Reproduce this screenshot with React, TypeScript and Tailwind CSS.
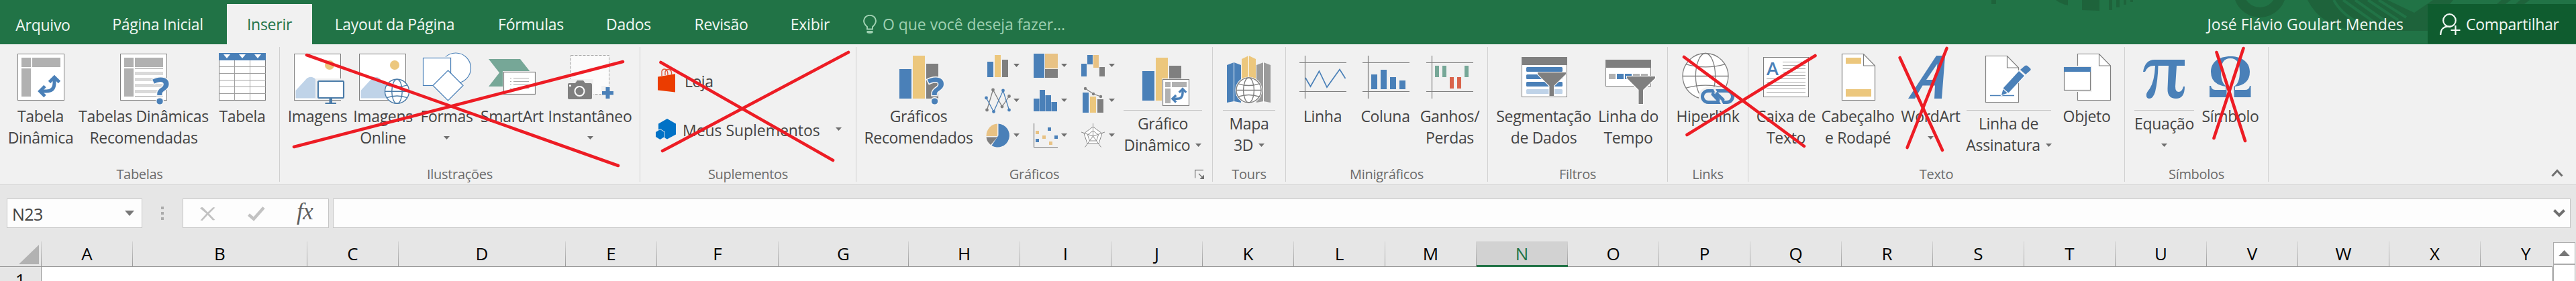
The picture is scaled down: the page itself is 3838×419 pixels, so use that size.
import type { ReactNode } from "react";

const BLUE = "#4a80b8";
const GOLD = "#ecc77d";
const GRAY = "#7f7f7f";

/* ---------- small building blocks ---------- */

function Caret({ className = "" }: { className?: string }) {
  return (
    <svg className={`h-[5px] w-[9px] shrink-0 ${className}`} viewBox="0 0 9 5">
      <path d="M0 0h9L4.5 5z" fill="#6f6f6f" />
    </svg>
  );
}

function Group({ label, width, children, extra }: { label: string; width: string; children: ReactNode; extra?: ReactNode }) {
  return (
    <section className={`flex h-[209px] shrink-0 ${width}`}>
      <div className="flex min-w-0 flex-1 flex-col">
        <div className="flex h-[180px]">{children}</div>
        <div className="relative text-center text-[20px] leading-[28px] tracking-[-0.3px] whitespace-nowrap text-[#6b6b6b]">
          {label}
          {extra}
        </div>
      </div>
      <div className="mt-1 h-[201px] w-px bg-[#d0d0d0]" />
    </section>
  );
}

type ItemProps = {
  box: string;
  view: string;
  lines: ReactNode[];
  split?: boolean;
  children: ReactNode;
};

function Item({ box, view, lines, split, children }: ItemProps) {
  return (
    <button className={`flex shrink-0 flex-col items-stretch ${box}`}>
      <svg className={`w-full shrink-0 overflow-visible ${split ? "h-[98px]" : "h-[91px]"}`} viewBox={view} preserveAspectRatio="xMidYMin slice">
        {children}
      </svg>
      {split && <span className="mb-[3px] h-px w-full shrink-0 bg-[#c6c6c6]" />}
      {lines.map((l, i) => (
        <span key={i} className="flex h-8 items-center justify-center text-[23px] leading-8 tracking-[-0.32px] whitespace-nowrap text-[#444444]">
          {l}
        </span>
      ))}
    </button>
  );
}

/* ---------- drawings shared by several icons ---------- */

function Globe({ cx, cy, rx, ry, stroke, w = 1.3 }: { cx: number; cy: number; rx: number; ry: number; stroke: string; w?: number }) {
  const k = ry * 0.52;
  const e = rx * 0.85;
  return (
    <g fill="none" stroke={stroke} strokeWidth={w}>
      <ellipse cx={cx} cy={cy} rx={rx} ry={ry} fill="#fff" />
      <ellipse cx={cx} cy={cy} rx={rx * 0.43} ry={ry} />
      <path d={`M${cx - rx} ${cy}H${cx + rx}M${cx - e} ${cy - k}Q${cx} ${cy - k * 0.65 + 2} ${cx + e} ${cy - k}M${cx - e} ${cy + k}Q${cx} ${cy + k * 0.65 - 2} ${cx + e} ${cy + k}`} />
    </g>
  );
}

function Swap({ x, y, s = 1, w = 5 }: { x: number; y: number; s?: number; w?: number }) {
  return (
    <g transform={`translate(${x} ${y}) scale(${s})`} fill="none" stroke={BLUE} strokeWidth={w}>
      <path d="M3 24H13Q25 24 25 12V4" />
      <path d="M17.5 10.5 25 3l7.500 7.500M11 16.500 3.500 24l7.500 7.500" strokeWidth={w * 0.95} />
    </g>
  );
}

function PictureFrame({ x }: { x: number }) {
  return (
    <g>
      <rect x={x} y="80.500" width="69" height="69" fill="#fff" stroke={GRAY} />
      <path d={`M${x + 2} 146.500V135L${x + 19} 116.500Q${x + 24.5} 113 ${x + 30} 116.500L${x + 50} 138V146.500z`} fill="#bfd3e8" />
      <circle cx={x + 52.5} cy="97" r="7" fill="#ecc77d" />
    </g>
  );
}

function Question({ x, y }: { x: number; y: number }) {
  return (
    <text x={x} y={y} fontSize="54" fontWeight="700" textAnchor="middle" fill={BLUE} stroke="#f5f5f5" strokeWidth="3" paintOrder="stroke" fontFamily="Open Sans, sans-serif">
      ?
    </text>
  );
}

function Page({ x, y, w = 49, h = 69 }: { x: number; y: number; w?: number; h?: number }) {
  return (
    <g fill="#fff" stroke={GRAY} strokeWidth="1.200">
      <path d={`M${x} ${y}H${x + w - 17}L${x + w} ${y + 17.5}V${y + h}H${x}z`} />
      <path d={`M${x + w - 17} ${y}V${y + 17.5}H${x + w}`} fill="none" />
    </g>
  );
}

function Funnel({ x, y, h }: { x: number; y: number; h: number }) {
  return <path d={`M${x} ${y}h42v2.500L${x + 24} ${y + 20}V${y + h}h-6.500V${y + 20}L${x} ${y + 2.5}z`} fill={GRAY} stroke="#fff" strokeWidth="2" paintOrder="stroke" />;
}

function SparkAxes({ x }: { x: number }) {
  return <path d={`M${x} 93.500h70M${x} 136.500h70M${x + 8.5} 83v64`} stroke={GRAY} strokeWidth="1.200" fill="none" />;
}

function MiniChart({ view, width, children, cx, cy }: { view: string; width: string; children: ReactNode; cx: number; cy: number }) {
  return (
    <svg className={`h-[52px] ${width}`} viewBox={view}>
      {children}
      <path d={`M${cx - 4.5} ${cy - 2.5}h9l-4.500 5z`} fill="#6f6f6f" />
    </svg>
  );
}

/* ---------- title tabs ---------- */

const tabs = [
  { t: "Arquivo", c: "w-[128px] pt-[1px]" },
  { t: "Página Inicial", c: "w-[210px] pl-1" },
  { t: "Inserir", c: "w-[127px] bg-[#f1f1f1] text-[#217346]" },
  { t: "Layout da Página", c: "w-[246px]" },
  { t: "Fórmulas", c: "w-[160px]" },
  { t: "Dados", c: "w-[131px]" },
  { t: "Revisão", c: "w-[145px]" },
  { t: "Exibir", c: "w-[120px]" },
];

function TitleBar() {
  return (
    <header className="relative flex h-[66px] bg-[#217346] pt-[6px] text-[23px] leading-[32px] tracking-[-0.27px] text-[#f0f7f2]">
      <svg className="absolute top-0 right-0 h-[66px] w-[898px]" viewBox="2940 0 898 66" fill="#1e633b">
        <path d="M2967 0h7v6h-7zM3063 0h18v8q-10-2-18-8zM3102 0h26v16l-26-1zM3142 0h5v15h-5zM3153 0h5v11h-5zM3164 0h4v7h-4zM3174 0h4v3h-4z" />
        <circle cx="3367" cy="-13" r="31.500" fill="none" stroke="#1e633b" strokeWidth="15" />
        <path d="M3438 0H3655L3617 46H3512Q3458 40 3438 0z" />
        <g stroke="#217346" strokeWidth="4" fill="none">
          <path d="M3477 0Q3490 24 3524 39M3491 0L3540 35M3509 0L3556 33M3528 0L3573 30M3544 0L3585 26" />
        </g>
        <path d="M3557 0H3625L3597 19z" fill="#217346" />
        <path d="M3727 0h14l-8 6h-13zM3755 0h14l-8 6h-13z" />
      </svg>
      <nav className="flex">
        {tabs.map((tab) => (
          <button key={tab.t} className={`flex shrink-0 justify-center whitespace-nowrap ${tab.c}`}>
            <span className="mt-[14px]">{tab.t}</span>
          </button>
        ))}
      </nav>
      <div className="flex pl-[19px] text-[#9fd0b1]">
        <svg className="mt-4 mr-[9px] h-[29px] w-[20px]" viewBox="0 0 20 29" fill="none" stroke="#9fd0b1" strokeWidth="2">
          <path d="M6 21.500V18Q1 13.500 1 9A9 8.200 0 0 1 19 9Q19 13.500 14 18V21.500z" />
          <path d="M5.500 24h9v3q-4.500 2-9 0z" fill="#9fd0b1" stroke="none" />
        </svg>
        <span className="mt-[14px] tracking-[-0.05px]">O que você deseja fazer...</span>
      </div>
      <div className="relative ml-auto mt-[14px] pr-[36px] tracking-[0.1px]">José Flávio Goulart Mendes</div>
      <button className="relative mb-px flex w-[221px] bg-[#0f5c2f] pl-[18px]">
        <svg className="mt-[14px] mr-[8px] h-[33px] w-[31px]" viewBox="0 0 31 33" fill="none" stroke="#f4faf6" strokeWidth="2.200">
          <circle cx="14.500" cy="10.500" r="9.300" />
          <path d="M1.200 32Q1.500 20 12 19.500H17M23.500 18V32M16.500 25H30.500" />
        </svg>
        <span className="mt-[14px]">Compartilhar</span>
      </button>
    </header>
  );
}

/* ---------- ribbon groups ---------- */

function Tabelas() {
  return (
    <Group label="Tabelas" width="w-[417px]">
      <Item box="ml-[11px] w-[99px]" view="11 66 99 91" lines={["Tabela", "Dinâmica"]}>
        <rect x="26.500" y="80.500" width="69" height="69" fill="#fff" stroke={GRAY} />
        <path d="M32 86h14v14H32zM48 86h42v14H48zM32 102h14v42H32z" fill="#b1b1b1" />
        <Swap x={56} y={112} s={1} />
      </Item>
      <Item box="ml-1 w-[200px]" view="114 66 200 91" lines={["Tabelas Dinâmicas", "Recomendadas"]}>
        <rect x="179.500" y="80.500" width="69" height="69" fill="#fff" stroke={GRAY} />
        <path d="M185 86h14v14h-14zM201 86h42v14h-42zM185 102h14v42h-14z" fill="#b1b1b1" />
        <path d="M201 107h42v5h-42zM201 116h42v5h-42zM201 125h42v5h-42zM201 134h42v5h-42z" fill="#dadada" />
        <path d="M201 102.500h42M201 143.500h42" stroke="#a8a8a8" />
        <Question x={240} y={155} />
      </Item>
      <Item box="ml-[11px] w-[72px]" view="325 66 72 91" lines={["Tabela"]}>
        <rect x="326.500" y="80.500" width="69" height="69" fill="#fff" stroke={GRAY} />
        <path d="M326 99.500h70M326 109.500h70M326 119.500h70M326 129.500h70M326 139.500h70M349.500 89v60M372.500 89v60" stroke="#a0a0a0" />
        <path d="M326 79h70v11h-70z" fill={BLUE} />
        <path d="M333 81h10l-5 6zM356 81h10l-5 6zM379 81h10l-5 6z" fill="#fff" />
      </Item>
    </Group>
  );
}

function Ilustracoes() {
  return (
    <Group label="Ilustrações" width="w-[537px]">
      <Item box="ml-[10px] w-[92px]" view="427 66 92 91" lines={["Imagens"]}>
        <PictureFrame x={438.5} />
        <path d="M471.500 118.500h43v29h-43z" fill="#fff" stroke="#f1f1f1" strokeWidth="3" />
        <rect x="474" y="121" width="38" height="25" rx="1" fill="#fff" stroke="#4a7ba8" strokeWidth="2.200" />
        <path d="M490.500 147h4.500v6h6v2h-16.500v-2h6z" fill="#4a7ba8" />
      </Item>
      <Item box="ml-[6px] w-[91px]" view="525 66 91 91" lines={["Imagens", "Online"]}>
        <PictureFrame x={535.5} />
        <Globe cx={591.5} cy={136.3} rx={18} ry={18} stroke="#4a7ba8" w={1.4} />
      </Item>
      <Item box="ml-[9px] w-[81px]" view="625 66 81 91" lines={["Formas", <Caret />]}>
        <g fill="#fff" stroke={BLUE} strokeWidth="1.200">
          <circle cx="679" cy="101.500" r="22.500" />
          <rect x="630.500" y="86.500" width="41" height="41" stroke="#f5f5f5" strokeWidth="4" />
          <rect x="630.500" y="86.500" width="41" height="41" />
          <path d="M667.500 105 690 127.500 667.500 150 645 127.500z" />
        </g>
      </Item>
      <Item box="ml-[9px] w-[96px]" view="715 66 96 91" lines={["SmartArt"]}>
        <path d="M728 88H775L790 107V129H728L744 108.500z" fill="#76a797" />
        <path d="M749 106h51v36h-51z" fill="#f5f5f5" />
        <rect x="750.500" y="107.500" width="47" height="33" fill="#fff" stroke={GRAY} strokeWidth="1.200" />
        <path d="M765 116.500h23M765 121.500h23M765 126.500h23M765 131.500h23" stroke="#a8a8a8" />
        <path d="M760 116.500h2M760 121.500h2M760 126.500h2M760 131.500h2" stroke="#a8a8a8" />
      </Item>
      <Item box="ml-[5px] w-[126px]" view="816 66 126 91" lines={["Instantâneo", <Caret />]}>
        <rect x="850.500" y="82.500" width="57" height="58" fill="#fff" fillOpacity="0.7" stroke="#a0a0a0" strokeDasharray="4 2" />
        <rect x="844" y="118" width="40" height="32" fill="#f1f1f1" />
        <path d="M848 124h9l3-4h9l3 4h8q2 0 2 2v20q0 2-2 2h-32q-2 0-2-2v-20q0-2 2-2z" fill={GRAY} />
        <circle cx="863.500" cy="136" r="7" fill="none" stroke="#fff" strokeWidth="2" />
        <path d="M848 126.500h3v2.500h-3z" fill="#fff" />
        <path d="M896 128h20v21h-20z" fill="#f1f1f1" />
        <path d="M902.500 130h6v6h5.500v5.500h-5.500v5.500h-6v-5.500H897V136h5.500z" fill={BLUE} />
      </Item>
    </Group>
  );
}

function Suplementos() {
  return (
    <Group label="Suplementos" width="w-[322px]">
      <div className="flex flex-col pt-[34px] pl-[22px] text-[23px] leading-[32px] tracking-[-0.05px] text-[#444444]">
        <div className="flex h-[40px]">
          <svg className="h-[38px] w-[30px]" viewBox="976 100 30 38">
            <path d="M986 113V106Q988 102 992 103.500Q995 105 995 112M991 112V107Q993 102 998 104Q1001 105.500 1000.500 111" fill="none" stroke="#e2583a" strokeWidth="1.400" />
            <path d="M980 114.500 1007 110Q1009 110 1009 112V136Q1009 138 1007 137.500L980 134.500z" fill="#eb3c00" />
          </svg>
          <span className="mt-[5px] ml-[14px] tracking-[-0.5px]">Loja</span>
        </div>
        <div className="mt-[36px] flex h-[36px]">
          <svg className="h-[33px] w-[32px]" viewBox="975 176 32 33" fill="#0072c6">
            <path d="M993 177 1006 184.500V200.500L993 207.500 980 200.500V184.500z" />
            <path d="M982.500 193 989 197V204L982.500 208 976 204V197z" stroke="#f1f1f1" strokeWidth="1.500" paintOrder="stroke" />
          </svg>
          <span className="mt-[2px] ml-[9px]">Meus Suplementos</span>
          <Caret className="mt-[14px] ml-[23px]" />
        </div>
      </div>
    </Group>
  );
}

function Graficos() {
  return (
    <Group
      label="Gráficos"
      width="w-[531px]"
      extra={
        <svg className="absolute top-[7px] right-[11px] h-[15px] w-[15px]" viewBox="0 0 15 15" fill="none" stroke="#6f6f6f" strokeWidth="1.200">
          <path d="M.6 12.500V.6H13M6 6l6 6" />
          <path d="M14 7.500V14H7.500z" fill="#6f6f6f" stroke="none" />
        </svg>
      }
    >
      <Item box="ml-[10px] w-[165px]" view="1286 66 165 91" lines={["Gráficos", "Recomendados"]}>
        <path d="M1340 103h18v44h-18z" fill={BLUE} />
        <path d="M1360 83h18v64h-18z" fill={GOLD} />
        <path d="M1380 95h18v52h-18z" fill={GRAY} />
        <Question x={1394.5} y={155} />
      </Item>
      <div className="mt-2 ml-[11px] grid h-[156px] grid-cols-[71px_71px_64px]">
        <MiniChart view="1462 74 71 52" width="w-[71px]" cx={1514.5} cy={97.5}>
          <path d="M1471 92h9v23h-9z" fill={BLUE} />
          <path d="M1482 82h9v33h-9z" fill={GOLD} />
          <path d="M1493 89h9v26h-9z" fill={GRAY} />
        </MiniChart>
        <MiniChart view="1533 74 71 52" width="w-[71px]" cx={1585.5} cy={97.5}>
          <path d="M1540 80h16v36h-16z" fill={BLUE} />
          <path d="M1557 80h19v22h-19z" fill="#e8c284" />
          <path d="M1557 103h19v13h-19z" fill={GRAY} />
        </MiniChart>
        <MiniChart view="1604 74 64 52" width="w-[64px]" cx={1656.5} cy={97.5}>
          <path d="M1611 95h8v19h-8zM1620 82h8v14h-8z" fill={BLUE} />
          <path d="M1629 82h8v19h-8z" fill="#e8c284" />
          <path d="M1638 100h8v14h-8z" fill={GRAY} />
        </MiniChart>
        <MiniChart view="1462 126 71 52" width="w-[71px]" cx={1514.5} cy={149.5}>
          <path d="M1470.500 164 1479.500 134 1493 159 1503.500 143.500" fill="none" stroke={GRAY} strokeWidth="1.300" />
          <path d="M1469.500 146 1480.500 166.500 1494.500 135 1503.500 164" fill="none" stroke={BLUE} strokeWidth="1.300" />
          <g fill={GRAY}>
            <circle cx="1470.500" cy="164" r="2.400" />
            <circle cx="1479.500" cy="134" r="2.400" />
            <circle cx="1493" cy="159" r="2.400" />
            <circle cx="1503.500" cy="143.500" r="2.400" />
          </g>
          <g fill={BLUE}>
            <circle cx="1469.500" cy="146" r="2.400" />
            <circle cx="1480.500" cy="166.500" r="2.400" />
            <circle cx="1494.500" cy="135" r="2.400" />
            <circle cx="1503.500" cy="164" r="2.400" />
          </g>
        </MiniChart>
        <MiniChart view="1533 126 71 52" width="w-[71px]" cx={1585.5} cy={149.5}>
          <path d="M1540 147h8v19h-8zM1549 134h8v32h-8zM1558 142h8v24h-8zM1567 152h8v14h-8z" fill={BLUE} />
          <path d="M1548 147h1v19h-1zM1557 142h1v24h-1zM1566 152h1v14h-1z" fill="#8fb0d4" />
        </MiniChart>
        <MiniChart view="1604 126 64 52" width="w-[64px]" cx={1656.5} cy={149.5}>
          <path d="M1613 138h9v30h-9z" fill={BLUE} />
          <path d="M1624 144h9v24h-9z" fill={GOLD} />
          <path d="M1635 148h9v20h-9z" fill={GRAY} />
          <path d="M1617 132 1629 140 1640 144" fill="none" stroke={GRAY} strokeWidth="1.300" />
          <circle cx="1617" cy="132" r="2.200" fill={GRAY} />
          <circle cx="1629" cy="140" r="2.200" fill={GRAY} />
          <circle cx="1640" cy="144" r="2.200" fill={GRAY} />
        </MiniChart>
        <MiniChart view="1462 178 71 52" width="w-[71px]" cx={1514.5} cy={201.5}>
          <path d="M1487.500 202V184.500A17.500 17.500 0 1 1 1477.500 217z" fill={BLUE} />
          <path d="M1486 203H1469.500A17 18 0 0 1 1486 184.500z" fill="#e8c284" />
          <path d="M1486 204.500H1469.500Q1470 211 1476 216z" fill={GRAY} />
        </MiniChart>
        <MiniChart view="1533 178 71 52" width="w-[71px]" cx={1585.5} cy={201.5}>
          <path d="M1540.500 184v35.500H1576" fill="none" stroke={GRAY} strokeWidth="1.200" />
          <path d="M1561 190h5v5h-5zM1543 207h5v5h-5zM1571 202h5v5h-5z" fill={BLUE} />
          <path d="M1543 195h5v5h-5zM1553 202h5v5h-5zM1563 211h5v5h-5z" fill="#e8c284" />
        </MiniChart>
        <MiniChart view="1604 178 64 52" width="w-[64px]" cx={1656.5} cy={201.5}>
          <g fill="none" stroke="#8a8a8a" strokeWidth="1">
            <path d="M1628.500 189 1642 199 1637 214H1620L1615 199z" fill="#fff" />
            <path d="M1628.500 195 1636.500 201 1633.500 210H1623.500L1620.500 201z" />
            <path d="M1628.500 184V203M1611 197 1628.500 203 1646 197M1616.500 219.500 1628.500 203 1640.500 219.500" />
          </g>
        </MiniChart>
      </div>
      <Item
        split
        box="ml-[6px] w-[117px]"
        view="1674 66 117 98"
        lines={["Gráfico", <><span className="mr-[8px]">Dinâmico</span><Caret /></>]}
      >
        <path d="M1702 106h18v44h-18z" fill={BLUE} />
        <path d="M1722 86h18v64h-18z" fill={GOLD} />
        <path d="M1742 98h18v30h-18z" fill={GRAY} />
        <path d="M1711 117h1z" />
        <rect x="1731" y="117" width="42" height="42" fill="#f5f5f5" />
        <rect x="1732.500" y="118.500" width="39" height="39" fill="#fff" stroke={GRAY} strokeWidth="1.200" />
        <path d="M1736 122h8v8h-8zM1746 122h22v8h-22zM1736 132h8v22h-8z" fill="#b1b1b1" />
        <Swap x={1744.5} y={130.5} s={0.7} w={5} />
      </Item>
    </Group>
  );
}

function Tours() {
  return (
    <Group label="Tours" width="w-[109px]">
      <Item split box="ml-[15px] w-[78px]" view="1822 66 78 98" lines={["Mapa", <><span className="mr-[8px]">3D</span><Caret /></>]}>
        <path d="M1828 97 1838.500 93 1849 97V153L1838.500 151 1828 153z" fill={BLUE} />
        <path d="M1850 88 1860.500 83 1871 88V140H1850z" fill={GOLD} />
        <path d="M1872 97 1882.500 93 1893 97V153L1882.500 151 1872 153z" fill="#9b9b9b" />
        <path d="M1838.500 93v60M1860.500 83v35M1882.500 93v60" stroke="#fff" />
        <circle cx="1860.500" cy="134.500" r="20" fill="#fff" />
        <Globe cx={1860.5} cy={134.5} rx={18.5} ry={18.5} stroke={GRAY} w={1.4} />
      </Item>
    </Group>
  );
}

function Minigraficos() {
  return (
    <Group label="Minigráficos" width="w-[301px]">
      <Item box="ml-[19px] w-[71px]" view="1935 66 71 91" lines={["Linha"]}>
        <SparkAxes x={1936} />
        <path d="M1945 116 1952.500 129 1965.500 106 1977 130 1996 103.500 2004.500 117" fill="none" stroke={BLUE} strokeWidth="1.700" />
      </Item>
      <Item box="ml-[20px] w-[76px]" view="2026 66 76 91" lines={["Coluna"]}>
        <SparkAxes x={2030} />
        <path d="M2043 111h9v22h-9zM2057 104h9v29h-9zM2071 115h9v18h-9zM2085 120h9v13h-9z" fill={BLUE} />
      </Item>
      <Item box="ml-[12px] w-[92px]" view="2114 66 92 91" lines={["Ganhos/", "Perdas"]}>
        <SparkAxes x={2125} />
        <path d="M2138 98h6v17h-6zM2149 98h6v17h-6zM2182 98h6v17h-6z" fill="#76a797" />
        <path d="M2160 115h6v17h-6zM2171 115h6v17h-6z" fill="#d9634a" />
      </Item>
    </Group>
  );
}

function Filtros() {
  return (
    <Group label="Filtros" width="w-[268px]">
      <Item box="ml-[9px] w-[148px]" view="2226 66 148 91" lines={["Segmentação", "de Dados"]}>
        <rect x="2267.500" y="85.500" width="67" height="59" fill="#fff" stroke={GRAY} />
        <path d="M2267 85h68v12h-68z" fill={GRAY} />
        <g fill={BLUE}>
          <rect x="2274" y="100" width="54" height="7" rx="1.500" />
          <rect x="2274" y="111" width="54" height="7" rx="1.500" />
          <rect x="2274" y="122" width="54" height="7" rx="1.500" />
          <rect x="2274" y="133" width="54" height="7" rx="1.500" fill="#bfd3e8" />
        </g>
        <Funnel x={2291} y={108} h={35} />
      </Item>
      <Item box="ml-[5px] w-[94px]" view="2379 66 94 91" lines={["Linha do", "Tempo"]}>
        <rect x="2392.500" y="89.500" width="67" height="39" fill="#fff" stroke={GRAY} />
        <path d="M2392 89h68v12h-68z" fill={GRAY} />
        <path d="M2397 110h10v8h-10zM2433 110h10v8h-10zM2445 110h10v8h-10z" fill="#b1b1b1" />
        <path d="M2409 110h10v8h-10zM2421 110h10v8h-10z" fill={BLUE} />
        <Funnel x={2424} y={114} h={41} />
      </Item>
    </Group>
  );
}

function Links() {
  return (
    <Group label="Links" width="w-[120px]">
      <Item box="ml-[10px] w-[99px]" view="2495 66 99 91" lines={["Hiperlink"]}>
        <Globe cx={2541} cy={113.5} rx={34} ry={34} stroke={GRAY} w={1.3} />
        <g fill="none" strokeLinecap="butt">
          <rect x="2531" y="130" width="56" height="28" rx="13" fill="#f1f1f1" />
          <rect x="2536.500" y="135.500" width="45" height="17" rx="8.500" fill="#f1f1f1" stroke={BLUE} strokeWidth="5" />
          <path d="M2553 130 2567 158" stroke="#f1f1f1" strokeWidth="3" />
          <path d="M2552 140.500 2560 149M2558 140 2567 148.500" stroke={BLUE} strokeWidth="5" strokeLinecap="round" />
        </g>
      </Item>
    </Group>
  );
}

function Texto() {
  return (
    <Group label="Texto" width="w-[561px]">
      <Item box="ml-[11px] w-[90px]" view="2616 66 90 91" lines={["Caixa de", "Texto"]}>
        <rect x="2627.500" y="85.500" width="67" height="59" fill="#fff" stroke={GRAY} />
        <path d="M2656 92.500h34M2656 97.500h34M2656 102.500h34M2656 107.500h34M2656 112.500h34M2632 117.500h58M2632 122.500h58M2632 127.500h58M2632 132.500h58M2632 137.500h58" stroke="#a8a8a8" />
        <text x="2641" y="112" fontSize="27" fontWeight="600" textAnchor="middle" fill={BLUE} fontFamily="Open Sans, sans-serif">
          A
        </text>
      </Item>
      <Item box="ml-[6px] w-[112px]" view="2712 66 112 91" lines={["Cabeçalho", "e Rodapé"]}>
        <Page x={2744.5} y={80.5} />
        <path d="M2750 86h23v9h-23zM2750 133h38v11h-38z" fill={GOLD} />
      </Item>
      <Item box="ml-[7px] w-[91px]" view="2831 66 91 91" lines={["WordArt", <Caret />]}>
        <path d="M2843 147 2885 83H2898L2893 147H2882L2883 127.500H2864.500L2853 147zM2870 119H2884L2886.500 95z" fill={BLUE} fillRule="evenodd" />
      </Item>
      <Item
        split
        box="ml-[8px] w-[126px]"
        view="2930 66 126 98"
        lines={[<span className="pr-px">Linha de</span>, <><span className="mr-[8px]">Assinatura</span><Caret /></>]}
      >
        <Page x={2958.5} y={83.5} />
        <path d="M2965 142.500h36" stroke={BLUE} strokeWidth="1.300" />
        <path d="M2982 142 2985 131 3008 106 3016 113 2993 138z" fill={BLUE} stroke="#fff" strokeWidth="2" paintOrder="stroke" />
        <path d="M3010 104 3017 98Q3019 97 3020.500 98L3025 102Q3026.500 103.500 3025 105L3018 111z" fill={BLUE} />
        <path d="M2984 132 2992 139" stroke="#fff" strokeWidth="1.200" />
      </Item>
      <Item box="ml-[16px] w-[74px]" view="3072 66 74 91" lines={["Objeto"]}>
        <Page x={3095.5} y={80.5} />
        <path d="M3074 98h43v39h-43z" fill="#f5f5f5" />
        <rect x="3075.500" y="100.500" width="39" height="34" fill="#fff" stroke={GRAY} strokeWidth="1.200" />
        <path d="M3075 100h40v7h-40z" fill={BLUE} />
      </Item>
    </Group>
  );
}

function Simbolos() {
  return (
    <Group label="Símbolos" width="w-[214px]">
      <Item split box="ml-[14px] w-[89px]" view="3180 66 89 98" lines={["Equação", <Caret />]}>
        <path
          d="M3193 107Q3196 89 3210 89H3255V98H3243L3241 129Q3241 137 3246 137Q3251 137 3253 129H3255Q3255 147 3242 147Q3229 147 3229.500 132L3231 98H3215.500Q3215 120 3211 137Q3208 147 3202 147Q3197 147 3198 140Q3199 137 3203 132Q3210 121 3211 98Q3200 97 3196 107z"
          fill={BLUE}
        />
      </Item>
      <Item box="ml-[10px] w-[88px]" view="3279 66 88 91" lines={["Símbolo"]}>
        <path
          d="M3292 128H3294Q3295 134 3301 134H3316V129Q3294 126 3294 107C3294 92 3307 84 3323 84S3352 92 3352 107Q3352 126 3330 129V134H3345Q3351 134 3352 128H3353.500V145H3328.500V129Q3337 124 3337 107Q3337 87 3323 87T3309 107Q3309 124 3317.500 129V145H3292z"
          fill={BLUE}
        />
      </Item>
    </Group>
  );
}

/* ---------- formula bar and sheet ---------- */

function FormulaBar() {
  return (
    <div className="flex h-[84px] items-start bg-[#e6e6e6] pt-[20px]">
      <div className="ml-[10px] flex h-[44px] w-[202px] items-center border border-[#c6c6c6] bg-[#fdfdfd] pr-[11px] pl-[7px] text-[25px] leading-[36px] tracking-[-0.6px] text-[#444444]">
        <span className="mt-[2px]">N23</span>
        <svg className="ml-auto h-[8px] w-[14px]" viewBox="0 0 14 8">
          <path d="M0 0h14L7 8z" fill="#777" />
        </svg>
      </div>
      <div className="mt-[12px] ml-[28px] flex w-1 flex-col gap-1">
        <i className="h-1 w-1 bg-[#ababab]" />
        <i className="h-1 w-1 bg-[#ababab]" />
        <i className="h-1 w-1 bg-[#ababab]" />
      </div>
      <div className="ml-[28px] flex h-[44px] w-[218px] border border-[#c6c6c6] bg-[#fdfdfd]">
        <svg className="mt-[11px] ml-[25px] h-[22px] w-[23px]" viewBox="0 0 23 22" fill="#c2c2c2">
          <path d="M0 2.500Q3 0 5 2L11.500 8.500 19.500 1 22.500 1.500 13.500 10.500 22.500 20 19 20.500 11.500 12.500 3.500 21 .5 20.500 9.500 10.500z" />
        </svg>
        <svg className="mt-[11px] ml-[48px] h-[22px] w-[26px]" viewBox="0 0 26 22" fill="none" stroke="#c2c2c2" strokeWidth="4.500">
          <path d="M1.500 12 9 18.500 24 1.500" />
        </svg>
        <span className="mt-[-1px] ml-[47px] font-['Liberation_Serif',serif] text-[35px] leading-[40px] tracking-[-0.5px] text-[#5f5f5f] italic">fx</span>
      </div>
      <div className="ml-[6px] flex h-[44px] w-[3334px] items-center justify-end border border-[#c6c6c6] bg-[#fdfdfd] pr-[7px]">
        <svg className="h-[12px] w-[18px]" viewBox="0 0 18 12" fill="none" stroke="#6f6f6f" strokeWidth="4">
          <path d="M1.500 1.500 9 9 16.500 1.500" />
        </svg>
      </div>
    </div>
  );
}

const columns: [string, string][] = [
  ["A", "w-[136px]"],
  ["B", "w-[260px]"],
  ["C", "w-[136px]"],
  ["D", "w-[249px]"],
  ["E", "w-[136px]"],
  ["F", "w-[181px]"],
  ["G", "w-[194px]"],
  ["H", "w-[166px]"],
  ..."IJKLMNOPQRSTUVWX".split("").map((l): [string, string] => [l, "w-[136px]"]),
];

function Sheet() {
  return (
    <div className="flex h-[59px] bg-[#e6e6e6]">
      <div className="w-[3803px]">
        <div className="flex h-[38px] border-b border-[#999999]">
          <div className="flex w-[62px] shrink-0 justify-end">
            <svg className="mt-[5px] mr-[3px] h-[29px] w-[30px]" viewBox="0 0 30 29">
              <path d="M30 0V29H0z" fill="#b2b2b2" />
            </svg>
            <div className="w-px bg-linear-to-b from-[#d4d4d4] to-[#999999]" />
          </div>
          {columns.map(([letter, width]) => {
            const active = letter === "N";
            return (
              <div key={letter} className={`flex shrink-0 ${width} ${active ? "mb-[-1px] border-b-[3px] border-[#217346] bg-[#d2d2d2]" : ""}`}>
                <div className={`flex-1 text-center text-[26px] leading-[40px] ${active ? "text-[#217346]" : "text-black"}`}>
                  <span className="inline-block h-[37px] -translate-y-[2px]">{letter}</span>
                </div>
                <div className="w-px bg-linear-to-b from-[#d4d4d4] to-[#999999]" />
              </div>
            );
          })}
          <div className="flex-1 pl-[60px] text-[26px] leading-[40px] text-black">
            <span className="inline-block h-[37px] -translate-y-[2px]">Y</span>
          </div>
        </div>
        <div className="flex h-[21px] overflow-hidden">
          <div className="w-[62px] shrink-0 border-r border-[#999999] text-center text-[26px] leading-[36px] text-black">
            <div className="mt-[1px]">1</div>
          </div>
          <div className="flex-1 border-r border-[#999999] bg-white" />
        </div>
      </div>
      <div className="ml-[1px] w-[33px] pt-px">
        <div className="flex h-[33px] items-center justify-center border border-[#ababab] bg-white">
          <svg className="h-[9px] w-[17px]" viewBox="0 0 17 9">
            <path d="M8.500 0 17 9H0z" fill="#777" />
          </svg>
        </div>
        <div className="h-[30px] border border-[#ababab] bg-white" />
      </div>
    </div>
  );
}

/* ---------- hand-drawn strokes over the ribbon ---------- */

const strokes = [
  [457, 82, 921, 247],
  [438, 219, 928, 92],
  [984.5, 93, 1241, 239],
  [987, 225, 1264, 78],
  [2509, 85, 2688, 218],
  [2513.5, 201, 2704.5, 83],
  [2830.6, 86, 2894, 224],
  [2841.6, 220, 2900.5, 72],
  [3302.5, 78, 3345, 210],
  [3298.5, 206, 3342.5, 72],
];

function InkLayer() {
  return (
    <svg className="pointer-events-none absolute inset-0 h-[419px] w-[3838px]" viewBox="0 0 3838 419" stroke="#ed1c24" strokeWidth="4.600" strokeLinecap="round">
      {strokes.map(([x1, y1, x2, y2]) => (
        <line key={`${x1}-${y1}`} x1={x1} y1={y1} x2={x2} y2={y2} />
      ))}
    </svg>
  );
}

export default function App() {
  return (
    <div className="relative h-[419px] w-[3838px] overflow-hidden bg-[#e6e6e6] font-['Open_Sans','Noto_Sans',sans-serif]">
      <TitleBar />
      <div className="flex h-[210px] border-b border-[#d2d2d2] bg-[#f1f1f1]">
        <Tabelas />
        <Ilustracoes />
        <Suplementos />
        <Graficos />
        <Tours />
        <Minigraficos />
        <Filtros />
        <Links />
        <Texto />
        <Simbolos />
        <div className="flex flex-1 items-end justify-end pr-[19px] pb-[11px]">
          <svg className="h-[12px] w-[18px]" viewBox="0 0 18 12" fill="none" stroke="#6f6f6f" strokeWidth="3">
            <path d="M1.500 10.500 9 2.500 16.500 10.500" />
          </svg>
        </div>
      </div>
      <FormulaBar />
      <Sheet />
      <InkLayer />
    </div>
  );
}
